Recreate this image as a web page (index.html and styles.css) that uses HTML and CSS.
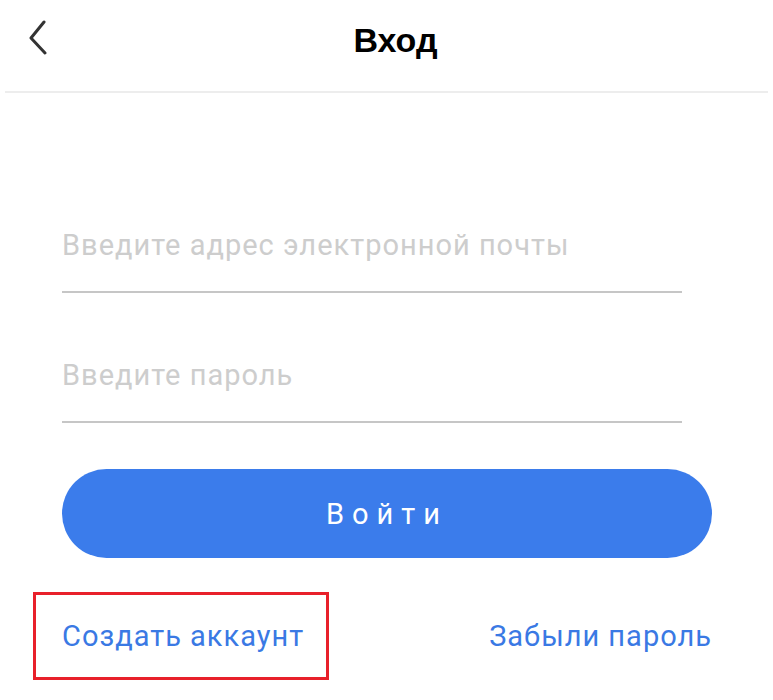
FILE: index.html
```html
<!DOCTYPE html>
<html lang="ru">
<head>
<meta charset="utf-8">
<title>Вход</title>
<link rel="stylesheet" href="styles.css">
</head>
<body>
<header class="topbar">
  <button class="back" aria-label="Назад">
    <svg width="20" height="36" viewBox="0 0 20 36"><polyline points="16,3 3,19 17,34" fill="none" stroke="#333" stroke-width="3" stroke-linecap="round" stroke-linejoin="round"/></svg>
  </button>
  <h1 class="title">Вход</h1>
  <span></span>
</header>
<main class="form">
  <label class="field"><input type="email" placeholder="Введите адрес электронной почты"></label>
  <label class="field"><input type="password" placeholder="Введите пароль"></label>
  <button class="submit">Войти</button>
  <div class="links">
    <a class="link link-create" href="#">Создать аккаунт</a>
    <a class="link" href="#">Забыли пароль</a>
  </div>
</main>
</body>
</html>
```

FILE: styles.css
```css
html, body {
  margin: 0;
  padding: 0;
  background: #fff;
}
body {
  font-family: Roboto, "Noto Sans", sans-serif;
  width: 773px;
  height: 700px;
  overflow: hidden;
}
.topbar {
  display: grid;
  grid-template-columns: 1fr auto 1fr;
  align-items: start;
  height: 91px;
  margin: 0 5px;
  border-bottom: 2px solid #ededed;
}
.back {
  justify-self: start;
  margin: 19px 0 0 23px;
  padding: 0;
  border: 0;
  background: none;
  width: 20px;
  height: 36px;
  display: block;
}
.back svg { display: block; }
.title {
  margin: 21px 0 0 18px;
  font-family: "Liberation Sans", Arial, sans-serif;
  font-weight: 700;
  font-size: 34px;
  line-height: 38px;
  color: #000;
}
.form {
  padding: 70px 61px 0 62px;
  display: flex;
  flex-direction: column;
}
.field {
  display: block;
  margin-right: 30px;
  padding: 66px 0 29px;
  border-bottom: 2px solid #c6c6c6;
}
.field input {
  display: block;
  width: 100%;
  border: 0;
  outline: none;
  padding: 0;
  margin: 0;
  font-family: Roboto, sans-serif;
  font-size: 29px;
  letter-spacing: 1px;
  line-height: 33px;
  height: 33px;
  color: #333;
  background: transparent;
}
.field input::placeholder {
  color: #cdcdcd;
}
.submit {
  margin-top: 46px;
  height: 89px;
  border: 0;
  border-radius: 45px;
  background: #3b7ceb;
  color: #fff;
  font-family: Roboto, sans-serif;
  font-size: 29px;
  letter-spacing: 8px;
  padding: 0;
}
.links {
  margin-top: 34px;
  display: flex;
  justify-content: space-between;
  align-items: center;
}
.link {
  font-family: Roboto, sans-serif;
  font-size: 29px;
  letter-spacing: 1px;
  line-height: 33px;
  color: #3a79e4;
  text-decoration: none;
}
.link-create {
  box-sizing: border-box;
  height: 88px;
  display: flex;
  align-items: center;
  margin-left: -29px;
  padding: 0 22px 0 26px;
  border: 3px solid #e8202a;
}
```
